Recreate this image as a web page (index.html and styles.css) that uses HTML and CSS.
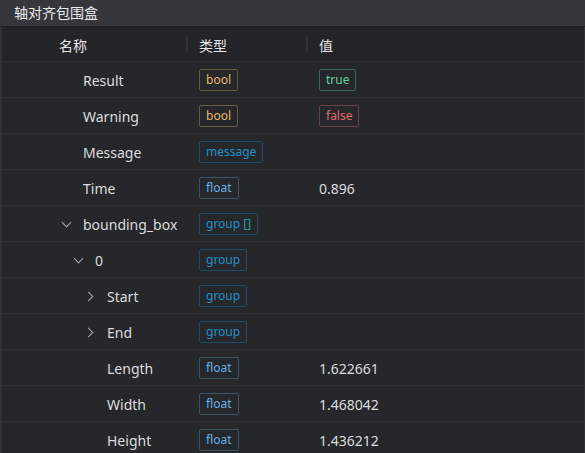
FILE: index.html
```html
<!DOCTYPE html>
<html lang="zh-CN">

<head>
    <meta charset="UTF-8">
    <meta name="viewport" content="width=device-width, initial-scale=1.0">
    <title>轴对齐包围盒</title>
    <link rel="stylesheet" href="styles.css">
</head>

<body>
    <div class="panel">
        <div class="panel-title">轴对齐包围盒</div>

        <div class="result-table">
            <div class="row head">
                <div class="cell name">名称</div>
                <div class="cell type"><span class="sep"></span>类型</div>
                <div class="cell value"><span class="sep"></span>值</div>
            </div>

            <div class="row">
                <div class="cell name"><span class="arrow"></span>Result</div>
                <div class="cell type"><span class="tag bool">bool</span></div>
                <div class="cell value"><span class="tag ok">true</span></div>
            </div>
            <div class="row">
                <div class="cell name"><span class="arrow"></span>Warning</div>
                <div class="cell type"><span class="tag bool">bool</span></div>
                <div class="cell value"><span class="tag bad">false</span></div>
            </div>
            <div class="row">
                <div class="cell name"><span class="arrow"></span>Message</div>
                <div class="cell type"><span class="tag group">message</span></div>
                <div class="cell value"></div>
            </div>
            <div class="row">
                <div class="cell name"><span class="arrow"></span>Time</div>
                <div class="cell type"><span class="tag float">float</span></div>
                <div class="cell value">0.896</div>
            </div>
            <div class="row">
                <div class="cell name"><span class="arrow down"></span>bounding_box</div>
                <div class="cell type"><span class="tag group">group <i class="brackets">[]</i></span></div>
                <div class="cell value"></div>
            </div>
            <div class="row">
                <div class="cell name level-1"><span class="arrow down"></span>0</div>
                <div class="cell type"><span class="tag group">group</span></div>
                <div class="cell value"></div>
            </div>
            <div class="row">
                <div class="cell name level-2"><span class="arrow right"></span>Start</div>
                <div class="cell type"><span class="tag group">group</span></div>
                <div class="cell value"></div>
            </div>
            <div class="row">
                <div class="cell name level-2"><span class="arrow right"></span>End</div>
                <div class="cell type"><span class="tag group">group</span></div>
                <div class="cell value"></div>
            </div>
            <div class="row">
                <div class="cell name level-2"><span class="arrow"></span>Length</div>
                <div class="cell type"><span class="tag float">float</span></div>
                <div class="cell value">1.622661</div>
            </div>
            <div class="row">
                <div class="cell name level-2"><span class="arrow"></span>Width</div>
                <div class="cell type"><span class="tag float">float</span></div>
                <div class="cell value">1.468042</div>
            </div>
            <div class="row">
                <div class="cell name level-2"><span class="arrow"></span>Height</div>
                <div class="cell type"><span class="tag float">float</span></div>
                <div class="cell value">1.436212</div>
            </div>
        </div>
    </div>
</body>

</html>
```

FILE: styles.css
```css
body {
    font-family: "Noto Sans", "Noto Sans CJK SC", sans-serif;
    margin: 0;
    padding: 0;
    background-color: #26272b;
    color: #dcdcdc;
    font-size: 14px;
}

.panel {
    height: 453px;
    overflow: hidden;
}

.panel-title {
    height: 26px;
    line-height: 25px;
    padding-left: 14px;
    background-color: #36373c;
    border-bottom: 1px solid #1f2023;
    color: #ececec;
    font-family: "Noto Sans CJK SC", sans-serif;
    font-size: 14px;
}

.result-table {
    border-left: 2px solid #313236;
    border-right: 1px solid #313236;
}

.row {
    display: grid;
    grid-template-columns: 184px 120px 1fr;
    height: 35px;
    border-bottom: 1px solid #2f3034;
    background-color: #26272b;
}

.row.head {
    background-color: #242529;
    height: 34px;
    color: #e6e6e6;
    font-family: "Noto Sans CJK SC", sans-serif;
}

.cell {
    display: flex;
    align-items: center;
    position: relative;
    white-space: nowrap;
    padding-top: 1px;
}

.cell.name {
    padding-left: 57px;
}

.cell.name.level-1 {
    padding-left: 69px;
}

.cell.name.level-2 {
    padding-left: 81px;
}

.cell.type,
.cell.value {
    padding-left: 13px;
}

.sep {
    position: absolute;
    left: 0;
    top: 10px;
    width: 2px;
    height: 15px;
    background-color: #313236;
}

.arrow {
    display: inline-block;
    width: 16px;
    height: 16px;
    margin-right: 8px;
    position: relative;
}

.arrow.down::before,
.arrow.right::before {
    content: "";
    position: absolute;
    width: 6px;
    height: 6px;
    border-right: 1px solid #a8a9ad;
    border-bottom: 1px solid #a8a9ad;
}

.arrow.down::before {
    left: 4px;
    top: 3px;
    transform: rotate(45deg);
}

.arrow.right::before {
    left: 2px;
    top: 5px;
    transform: rotate(-45deg);
}

.tag {
    display: inline-block;
    height: 20px;
    line-height: 20px;
    padding: 0 6px;
    border: 1px solid;
    border-radius: 2px;
    font-size: 12px;
}

.tag.bool {
    color: #e2b865;
    border-color: #6a5c44;
}

.tag.ok {
    color: #62d39c;
    border-color: #3c6757;
}

.tag.bad {
    color: #e06a6a;
    border-color: #6b4042;
}

.tag.group {
    color: #2490c8;
    border-color: #1d4a60;
}

.tag.float {
    color: #62b3ee;
    border-color: #3a5466;
}

.brackets {
    font-style: normal;
    color: #1fa0a8;
}
```
